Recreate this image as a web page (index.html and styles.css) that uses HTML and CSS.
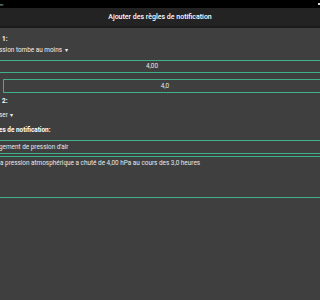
FILE: index.html
```html
<!DOCTYPE html>
<html lang="fr">
<head>
  <meta charset="UTF-8">
  <meta name="viewport" content="width=device-width, initial-scale=1.0">
  <title>Ajouter des règles de notification</title>
  <link rel="stylesheet" href="styles.css">
</head>
<body>
  <div class="status-bar">
    <span class="status-text">er.</span>
    <span class="battery"></span>
  </div>
  <div class="nav-bar">Ajouter des règles de notification</div>

  <div class="form">
    <p class="label rule-one">1:</p>
    <p class="picker">ssion tombe au moins <span class="caret">&#9662;</span></p>
    <div class="field field-value">4,00</div>
    <div class="field field-hours">4,0</div>

    <p class="label rule-two">2:</p>
    <p class="picker picker-two">ser <span class="caret">&#9662;</span></p>

    <p class="label messages">es de notification:</p>
    <div class="field field-title">gement de pression d'air</div>
    <div class="field field-body">a pression atmosphérique a chuté de 4,00 hPa au cours des 3,0 heures</div>
  </div>
</body>
</html>
```

FILE: styles.css
```css
html,
body {
  margin: 0;
  padding: 0;
  width: 320px;
  height: 300px;
  overflow: hidden;
  background-color: #3f3f3f;
  font-family: Roboto, "Liberation Sans", sans-serif;
  color: #e4e4e4;
  font-size: 6.4px;
}

p {
  margin: 0;
}

.status-bar {
  height: 8px;
  background-color: #000;
  display: flex;
  justify-content: space-between;
  align-items: center;
}

.status-text {
  font-size: 4px;
  color: #bbb;
}

.battery {
  width: 2px;
  height: 2px;
  background-color: #ddd;
}

.nav-bar {
  height: 18px;
  line-height: 18px;
  background-color: #232323;
  border-bottom: 2px solid #1a1a1a;
  text-align: center;
  color: #fff;
  font-size: 7px;
  font-weight: 500;
}

.form {
  display: flex;
  flex-direction: column;
}

.label {
  line-height: 10px;
  font-weight: bold;
  color: #fff;
}

.rule-one {
  margin-top: 6px;
  padding-left: 2px;
}

.picker {
  line-height: 10px;
  margin-top: 1px;
  margin-left: -1px;
  color: #f0f0f0;
}

.caret {
  font-size: 6px;
  padding-left: 1px;
}

.field {
  box-sizing: border-box;
  border: 1px solid #40b08a;
  line-height: 11px;
  color: #e8e8e8;
}

.field-value {
  margin: 5px -10px 0;
  height: 13px;
  text-align: center;
  padding-right: 16px;
}

.field-hours {
  margin: 6px -10px 0 3px;
  height: 14px;
  line-height: 12px;
  text-align: center;
  padding-right: 3px;
}

.rule-two {
  margin-top: 3px;
  padding-left: 2px;
}

.picker-two {
  margin-top: 4px;
}

.messages {
  margin-top: 5px;
  margin-left: -1px;
}

.field-title {
  margin: 5px -10px 0;
  height: 14px;
  line-height: 12px;
  padding-left: 8px;
}

.field-body {
  margin: 2px -10px 0;
  height: 42px;
  padding: 1px 0 0 9px;
  line-height: 10px;
}
```
